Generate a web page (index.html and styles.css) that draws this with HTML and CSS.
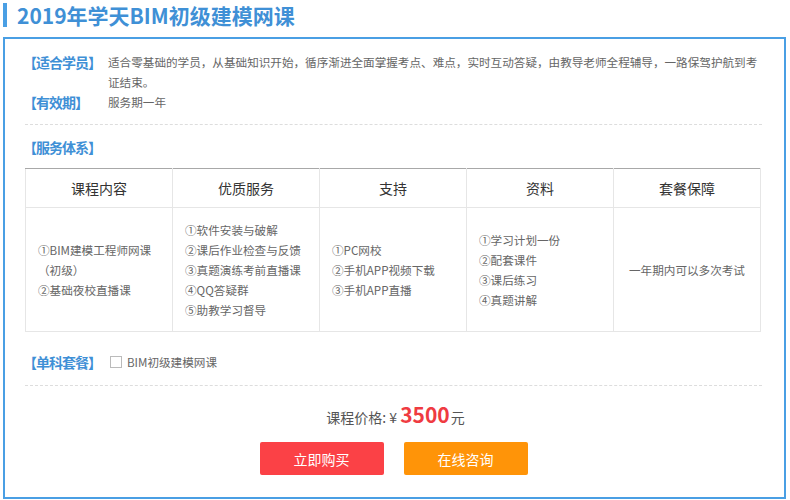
FILE: index.html
```html
<!DOCTYPE html>
<html lang="zh-CN">
<head>
  <meta charset="UTF-8">
  <title>2019年学天BIM初级建模网课</title>
  <meta name="viewport" content="width=device-width, initial-scale=1.0">
  <link rel="stylesheet" href="styles.css">
</head>
<body>
  <h1 class="page-title">2019年学天BIM初级建模网课</h1>

  <div class="course-box">
    <div class="info-row">
      <span class="label">【适合学员】</span>
      <p class="info-text">适合零基础的学员，从基础知识开始，循序渐进全面掌握考点、难点，实时互动答疑，由教导老师全程辅导，一路保驾护航到考证结束。</p>
    </div>
    <div class="info-row">
      <span class="label">【有效期】</span>
      <p class="info-text">服务期一年</p>
    </div>

    <div class="divider"></div>

    <div class="section-title label">【服务体系】</div>

    <table class="service-table">
      <thead>
        <tr>
          <th>课程内容</th>
          <th>优质服务</th>
          <th>支持</th>
          <th>资料</th>
          <th>套餐保障</th>
        </tr>
      </thead>
      <tbody>
        <tr>
          <td>
            <div>①BIM建模工程师网课</div>
            <div>（初级）</div>
            <div>②基础夜校直播课</div>
          </td>
          <td>
            <div>①软件安装与破解</div>
            <div>②课后作业检查与反馈</div>
            <div>③真题演练考前直播课</div>
            <div>④QQ答疑群</div>
            <div>⑤助教学习督导</div>
          </td>
          <td>
            <div>①PC网校</div>
            <div>②手机APP视频下载</div>
            <div>③手机APP直播</div>
          </td>
          <td>
            <div>①学习计划一份</div>
            <div>②配套课件</div>
            <div>③课后练习</div>
            <div>④真题讲解</div>
          </td>
          <td class="center">一年期内可以多次考试</td>
        </tr>
      </tbody>
    </table>

    <div class="single-row">
      <span class="label">【单科套餐】</span>
      <label class="check">
        <span class="check-box"></span>
        BIM初级建模网课
      </label>
    </div>

    <div class="divider"></div>

    <div class="price">
      课程价格: ¥<span class="price-num">3500</span>元
    </div>

    <div class="actions">
      <button class="btn btn-buy">立即购买</button>
      <button class="btn btn-ask">在线咨询</button>
    </div>
  </div>
</body>
</html>
```

FILE: styles.css
```css
:root {
  --blue: #3f90d6;
  --border-blue: #4a9fe4;
  --text: #333333;
  --muted: #666666;
  --line: #e6e6e6;
  --red: #fb4146;
  --orange: #ff9408;
}

body {
  margin: 0;
  font-family: "Microsoft YaHei", "Noto Sans CJK SC", "Noto Sans", sans-serif;
  color: var(--text);
  background: #ffffff;
}

.page-title {
  margin: 3px 0 10px 3px;
  height: 24px;
  line-height: 24px;
  padding-left: 10px;
  border-left: 4px solid var(--border-blue);
  color: var(--blue);
  font-size: 21px;
  font-weight: bold;
}

.course-box {
  box-sizing: border-box;
  width: 783px;
  height: 462px;
  margin-left: 3px;
  padding: 13px 22px 0 20px;
  border: 2px solid var(--border-blue);
}

.label {
  color: var(--blue);
  font-size: 14px;
  font-weight: bold;
  white-space: nowrap;
  letter-spacing: -1px;
}

.info-row {
  display: flex;
  line-height: 20px;
}

.info-row .label {
  flex: 0 0 85px;
  margin-left: -2px;
}

.info-text {
  margin: 0;
  font-size: 11.6px;
  color: var(--muted);
}

.divider {
  height: 0;
  border-top: 1px dashed #dddddd;
  margin-top: 12px;
}

.section-title {
  display: block;
  margin: 12px 0 11px -2px;
  line-height: 20px;
}

.service-table {
  width: 736px;
  border-collapse: collapse;
  table-layout: fixed;
}

.service-table th {
  height: 38px;
  padding: 0;
  border: 1px solid var(--line);
  border-top: 1px solid #a8a8a8;
  font-size: 14px;
  font-weight: normal;
  color: var(--text);
}

.service-table td {
  height: 123px;
  padding: 0 12px;
  border: 1px solid var(--line);
  font-size: 11.6px;
  line-height: 20px;
  color: var(--muted);
  vertical-align: middle;
}

.service-table td.center {
  text-align: center;
  padding: 0;
}

.single-row {
  display: flex;
  align-items: center;
  margin-top: 20px;
  line-height: 20px;
}

.single-row .label {
  margin-left: -2px;
}

.check {
  display: flex;
  align-items: center;
  gap: 5px;
  margin-left: 9px;
  font-size: 11.6px;
  color: var(--muted);
}

.check-box {
  width: 10px;
  height: 10px;
  border: 1px solid #bbbbbb;
  background: #ffffff;
}

.single-row + .divider {
  margin-top: 13px;
}

.price {
  margin-top: 16px;
  height: 24px;
  line-height: 24px;
  text-align: center;
  font-size: 14px;
  color: #555555;
  padding-left: 4px;
}

.price-num {
  margin: 0 1px 0 3px;
  color: #ef3b41;
  font-size: 21px;
  font-weight: bold;
}

.actions {
  display: flex;
  justify-content: center;
  gap: 20px;
  margin-top: 16px;
}

.btn {
  width: 124px;
  height: 33px;
  border: none;
  border-radius: 2px;
  color: #ffffff;
  font-family: inherit;
  font-size: 14px;
  cursor: pointer;
}

.btn-buy {
  background: var(--red);
}

.btn-ask {
  background: var(--orange);
}
```
